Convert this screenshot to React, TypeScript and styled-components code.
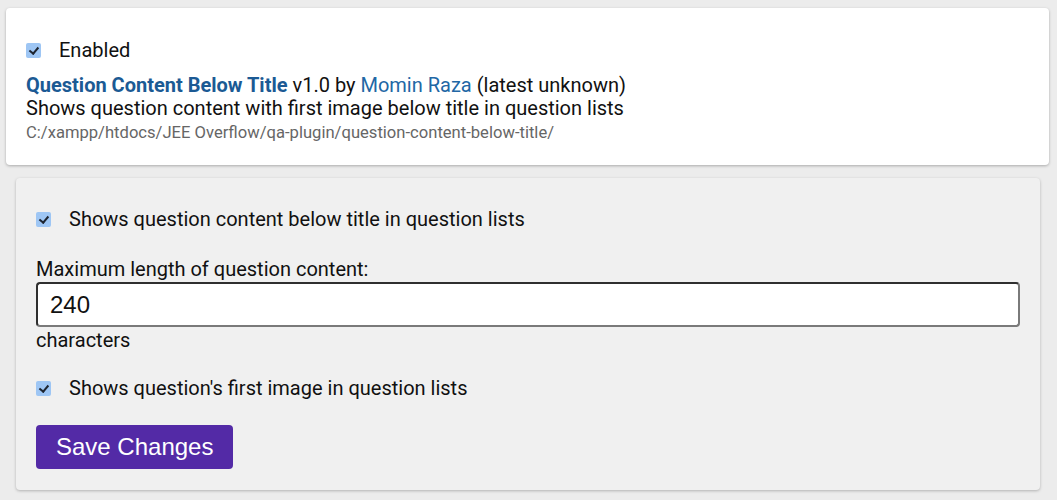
import React from "react";
import styled, { createGlobalStyle } from "styled-components";

const Global = createGlobalStyle`
  html, body { margin: 0; padding: 0; background: #ececec; }
  body { font-family: Roboto, "Noto Sans", sans-serif; color: #111; }
`;

const Page = styled.div`
  padding: 8px 8px 10px 6px;
  display: flex;
  flex-direction: column;
  gap: 13px;
`;

const Card = styled.section`
  background: #fff;
  border-radius: 4px;
  box-shadow: 0 1px 3px rgba(0, 0, 0, 0.28);
  padding: 30px 20px 21px;
  width: 1043px;
  box-sizing: border-box;
`;

const Panel = styled.form`
  background: #f0f0f0;
  border-radius: 4px;
  box-shadow: 0 1px 3px rgba(0, 0, 0, 0.25);
  margin: 0 10px;
  padding: 29px 20px 21px;
  width: 1024px;
  box-sizing: border-box;
  display: flex;
  flex-direction: column;
  align-items: flex-start;
`;

const CheckRow = styled.label<{ $mt?: number }>`
  display: flex;
  align-items: center;
  gap: 18px;
  font-size: 20px;
  line-height: 24px;
  margin-top: ${(p) => p.$mt ?? 0}px;
`;

const Check = styled.input.attrs({ type: "checkbox" })`
  appearance: none;
  margin: 0;
  width: 15px;
  height: 15px;
  border-radius: 2px;
  background: #9ec6f4;
  position: relative;
  flex: none;
  &::after {
    content: "";
    position: absolute;
    left: 5px;
    top: 2px;
    width: 3.5px;
    height: 7px;
    border: solid #1e2530;
    border-width: 0 2px 2px 0;
    transform: rotate(40deg);
  }
`;

const Info = styled.div`
  margin-top: 12px;
  font-size: 20px;
  line-height: 23px;
`;

const TitleLink = styled.a`
  color: #1b5a94;
  font-weight: 700;
  text-decoration: none;
`;

const AuthorLink = styled.a`
  color: #2267a5;
  text-decoration: none;
`;

const Path = styled.div`
  font-size: 16.6px;
  line-height: 22px;
  color: #666;
  margin-top: 2px;
`;

const Label = styled.div`
  margin-top: 27px;
  font-size: 20px;
  line-height: 23px;
`;

const NumberInput = styled.input`
  margin-top: 1px;
  width: 984px;
  height: 45px;
  box-sizing: border-box;
  border: 2px solid #7a7a7a;
  border-top-color: #2f2f2f;
  border-left-color: #2f2f2f;
  border-radius: 4px;
  background: #fff;
  padding: 0 12px;
  font-family: "Liberation Sans", Arial, sans-serif;
  font-size: 24px;
  color: #111;
  outline: none;
`;

const Suffix = styled.div`
  margin-top: 2px;
  font-size: 20px;
  line-height: 23px;
`;

const SaveButton = styled.button`
  margin-top: 25px;
  height: 44px;
  padding: 0 20px;
  border: none;
  border-radius: 4px;
  background: #532aa6;
  color: #fff;
  font-family: "Liberation Sans", Arial, sans-serif;
  font-size: 24px;
  cursor: pointer;
`;

export default function App() {
  return (
    <>
      <Global />
      <Page>
        <Card>
          <CheckRow>
            <Check defaultChecked />
            Enabled
          </CheckRow>
          <Info>
            <div>
              <TitleLink href="#">Question Content Below Title</TitleLink> v1.0 by{" "}
              <AuthorLink href="#">Momin Raza</AuthorLink> (latest unknown)
            </div>
            <div>Shows question content with first image below title in question lists</div>
          </Info>
          <Path>C:/xampp/htdocs/JEE Overflow/qa-plugin/question-content-below-title/</Path>
        </Card>
        <Panel onSubmit={(e) => e.preventDefault()}>
          <CheckRow>
            <Check defaultChecked />
            Shows question content below title in question lists
          </CheckRow>
          <Label>Maximum length of question content:</Label>
          <NumberInput type="text" defaultValue="240" />
          <Suffix>characters</Suffix>
          <CheckRow $mt={24}>
            <Check defaultChecked />
            Shows question's first image in question lists
          </CheckRow>
          <SaveButton type="submit">Save Changes</SaveButton>
        </Panel>
      </Page>
    </>
  );
}
